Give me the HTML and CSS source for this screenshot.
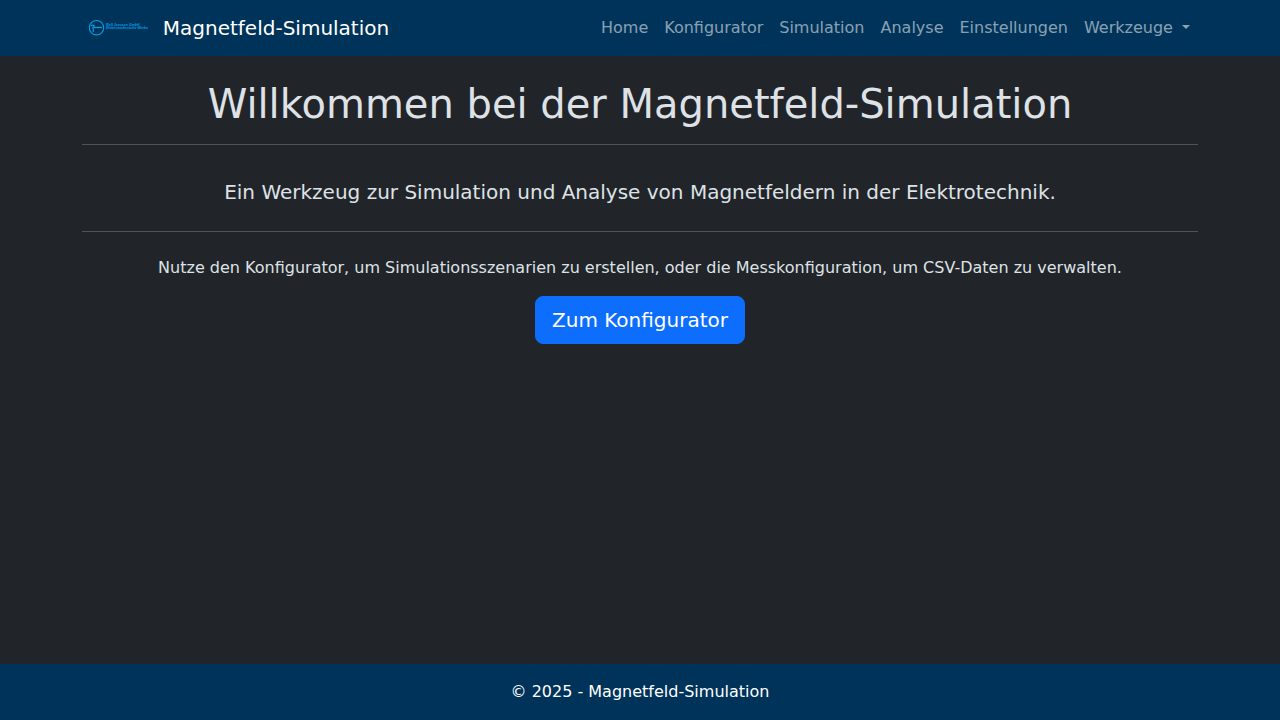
FILE: index.html
```html
<!DOCTYPE html>
<html lang="de">
<head>
<meta charset="utf-8">
<title>Magnetfeld-Simulation</title>
<link rel="stylesheet" href="styles.css">
</head>
<body>
<header class="navbar">
  <div class="container navbar-inner">
    <a class="brand" href="#">
      <svg class="logo" viewBox="0 0 72.8 30" role="img">
        <g fill="none" stroke="#009ee3">
          <circle cx="14.5" cy="14.7" r="7.200" stroke-width="1.100"/>
          <path d="M9 12.800q1.700-1.400 3.200-.2q-.2 1.200-1.400 1.700q.8 1.200 .5 4.700" stroke-width="1.200"/>
          <path d="M11.500 14.500h8.500" stroke-width="1.300"/>
        </g>
        <g class="logo-text">
          <text x="24" y="12.700" textLength="33.500" lengthAdjust="spacingAndGlyphs">Rolf Janssen GmbH</text>
          <text x="24" y="16.500" textLength="42" lengthAdjust="spacingAndGlyphs">Elektrotechnische Werke</text>
        </g>
      </svg>
      <span>Magnetfeld-Simulation</span>
    </a>
    <nav class="nav">
      <a class="nav-link" href="#">Home</a>
      <a class="nav-link" href="#">Konfigurator</a>
      <a class="nav-link" href="#">Simulation</a>
      <a class="nav-link" href="#">Analyse</a>
      <a class="nav-link" href="#">Einstellungen</a>
      <a class="nav-link dropdown" href="#">Werkzeuge </a>
    </nav>
  </div>
</header>
<main class="container content">
  <h1>Willkommen bei der Magnetfeld-Simulation</h1>
  <hr>
  <p class="lead">Ein Werkzeug zur Simulation und Analyse von Magnetfeldern in der Elektrotechnik.</p>
  <hr class="divider">
  <p>Nutze den Konfigurator, um Simulationsszenarien zu erstellen, oder die Messkonfiguration, um CSV-Daten zu verwalten.</p>
  <a class="button" href="#">Zum Konfigurator</a>
</main>
<footer class="footer">© 2025 - Magnetfeld-Simulation</footer>
</body>
</html>
```
FILE: styles.css
```css
* {
  box-sizing: border-box;
}

body {
  margin: 0;
  min-height: 100vh;
  display: flex;
  flex-direction: column;
  background: #212529;
  color: #dee2e6;
  font: 16px/1.5 "DejaVu Sans", sans-serif;
}

a {
  text-decoration: none;
}

.container {
  width: 100%;
  max-width: 1140px;
  margin: 0 auto;
  padding: 0 12px;
}

.navbar {
  height: 56px;
  background: #003359;
  display: flex;
  align-items: center;
}

.navbar-inner {
  display: flex;
  align-items: center;
  justify-content: space-between;
}

.brand {
  display: flex;
  align-items: center;
  gap: 8px;
  color: #fff;
  font-size: 20px;
}

.logo {
  width: 72.8px;
  height: 30px;
  display: block;
}

.logo-text {
  fill: #009ee3;
  font: italic bold 3.9px "Liberation Sans", sans-serif;
}

.nav {
  display: flex;
}

.nav-link {
  padding: 8px;
  color: rgba(255, 255, 255, .55);
  white-space: pre;
}

.dropdown::after {
  content: "";
  display: inline-block;
  margin-left: 4px;
  vertical-align: 4px;
  border-top: 4.8px solid;
  border-right: 4.8px solid transparent;
  border-left: 4.8px solid transparent;
}

.content {
  flex: 1;
  padding-top: 24px;
  text-align: center;
}

h1 {
  margin: 0 0 8px;
  font-size: 40px;
  font-weight: 400;
  line-height: 1.2;
}

hr {
  margin: 16px 0;
  color: inherit;
  border: 0;
  border-top: 1px solid;
  opacity: .25;
}

p {
  margin: 0 0 16px;
}

.lead {
  margin: 32px 0 24px;
  font-size: 20px;
}

.divider {
  margin: 24px 0;
}

.button {
  display: inline-block;
  padding: 8px 16px;
  border: 1px solid #0d6efd;
  border-radius: 8px;
  background: #0d6efd;
  color: #fff;
  font-size: 20px;
}

.footer {
  padding: 16px;
  background: #003359;
  color: #fff;
  text-align: center;
}
```
